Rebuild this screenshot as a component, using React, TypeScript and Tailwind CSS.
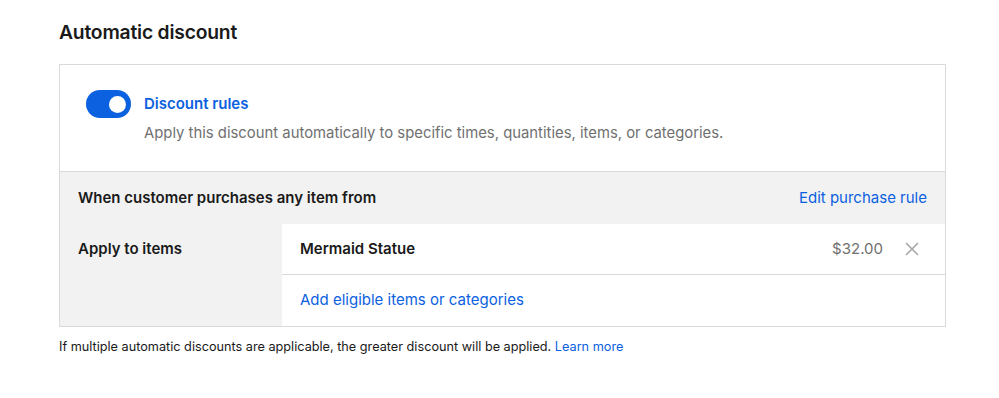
export default function App() {
  return (
    <div className="w-[999px] h-[398px] bg-white px-[59px] pt-[19px] text-[#1a1a1a]" style={{ fontFamily: "Inter, 'Noto Sans', sans-serif" }}>
      <h2 className="text-[19.3px] leading-[26px] font-semibold tracking-[-0.2px]">Automatic discount</h2>
      <div className="mt-[19px] w-[887px] border border-[#dadada]">
        <div className="flex items-start pl-[26px] pt-[24px] pb-[24px] border-b border-[#dadada]">
          <div className="w-[45px] h-[28px] rounded-full bg-[#0b61e0] flex items-center justify-end pr-[5px] mt-[1px]">
            <div className="w-[17px] h-[17px] rounded-full bg-white" />
          </div>
          <div className="ml-[13px]">
            <div className="text-[15px] leading-[30px] font-semibold text-[#0b61e0]">Discount rules</div>
            <div className="text-[14.85px] leading-[28px] text-[#707070]">Apply this discount automatically to specific times, quantities, items, or categories.</div>
          </div>
        </div>
        <div className="bg-[#f2f2f2]">
          <div className="flex items-center justify-between h-[52px] pl-[18px] pr-[18px]">
            <span className="text-[15px] font-semibold">When customer purchases any item from</span>
            <a className="text-[15px] text-[#0b61e0]">Edit purchase rule</a>
          </div>
          <div className="flex">
            <div className="w-[222px] pl-[18px] h-[51px] flex items-center text-[15px] font-semibold">Apply to items</div>
            <div className="flex-1 bg-white">
              <div className="flex items-center h-[51px] border-b border-[#dadada] pl-[18px] pr-[26px]">
                <span className="text-[15px] font-semibold flex-1">Mermaid Statue</span>
                <span className="text-[15px] text-[#707070]">$32.00</span>
                <svg className="ml-[22px]" width="14" height="14" viewBox="0 0 14 14" fill="none" stroke="#a6a6a6" strokeWidth="1.6">
                  <path d="M1 1L13 13M13 1L1 13" />
                </svg>
              </div>
              <div className="flex items-center h-[51px] pl-[18px]">
                <a className="text-[15px] text-[#0b61e0]">Add eligible items or categories</a>
              </div>
            </div>
          </div>
        </div>
      </div>
      <p className="mt-[11px] text-[12.7px] leading-[18px] text-[#1a1a1a]">
        If multiple automatic discounts are applicable, the greater discount will be applied. <a className="text-[#0b61e0]">Learn more</a>
      </p>
    </div>
  );
}
